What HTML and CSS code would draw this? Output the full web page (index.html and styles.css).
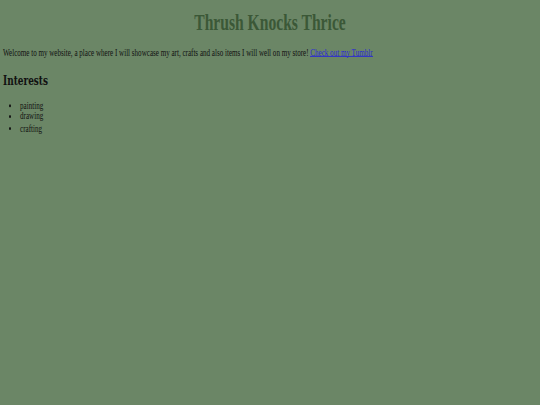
FILE: index.html
```html
<!DOCTYPE html>
<html>
<head>
<meta charset="utf-8">
<title>Thrush Knocks Thrice</title>
<link rel="stylesheet" href="styles.css">
</head>
<body>
<div class="page">
  <h1 class="title">Thrush Knocks Thrice</h1>
  <p class="intro">Welcome to my website, a place where I will showcase my art, crafts and also items I will well on my store! <a class="link" href="#">Check out my Tumblr</a></p>
  <h2 class="section">Interests</h2>
  <ul class="interests">
    <li>painting</li>
    <li>drawing</li>
    <li>crafting</li>
  </ul>
</div>
</body>
</html>
```

FILE: styles.css
```css
html, body {
  margin: 0;
  padding: 0;
  background: #6b8666;
  width: 540px;
  height: 405px;
  overflow: hidden;
}
/* The reference is a horizontally squeezed capture: lay out at the
   horizontal scale and stretch vertically. */
.page {
  width: 540px;
  padding: 7.44px 2.98px 0;
  box-sizing: border-box;
  transform: scaleY(1.5121);
  transform-origin: 0 0;
  font-family: "Liberation Serif", serif;
  font-size: 7.07px;
  line-height: 7.59px;
  color: #111;
}
.title {
  text-align: center;
  color: #3b5837;
  font-size: 15.62px;
  line-height: 15.62px;
  margin: 0;
}
.intro {
  margin: 8.74px 0 0;
}
.link {
  color: #2b2bd0;
  text-decoration: none;
  background-image: linear-gradient(#2b2bd0, #2b2bd0);
  background-repeat: no-repeat;
  background-size: 100% 0.62px;
  background-position: 0 calc(100% - 0.75px);
}
.section {
  font-family: "DejaVu Serif", serif;
  font-size: 8.93px;
  line-height: 8.93px;
  margin: 9.3px 0 0;
}
.interests {
  margin: 9.1px 0 0;
  padding-left: 17.1px;
}
```
